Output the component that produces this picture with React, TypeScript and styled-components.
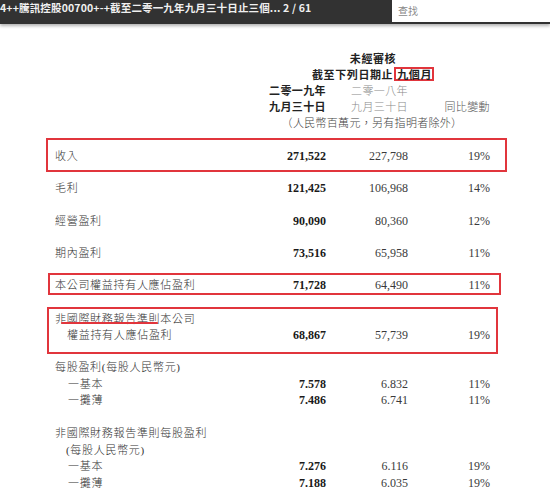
import React from "react";
import styled, { createGlobalStyle, css } from "styled-components";

const GlobalStyle = createGlobalStyle`
  html, body { margin: 0; padding: 0; background: #fff; }
  body {
    width: 550px;
    height: 499px;
    overflow: hidden;
    font-family: "Liberation Serif", "Noto Sans CJK TC", serif;
  }
`;

const RED = "#e1353c";
const COLS = "189px 82px 82px 82px";

const TopBar = styled.div`
  position: relative;
  z-index: 1;
  display: flex;
  align-items: flex-start;
  height: 24px;
  background: #323232;
  box-shadow: 0 2px 3px rgba(0, 0, 0, 0.3);
`;

const Title = styled.div`
  flex: 1;
  height: 22px;
  line-height: 22px;
  overflow: hidden;
  white-space: nowrap;
  color: #f0f0f0;
  font: 700 10.5px "Noto Sans CJK TC", "Liberation Sans", sans-serif;
  letter-spacing: 0.15px;
`;

const Search = styled.div`
  width: 158px;
  height: 22px;
  box-sizing: border-box;
  padding-left: 6px;
  background: #fff;
  color: #8a8a8a;
  font: 400 10px/22px "Noto Sans CJK TC", "Liberation Sans", sans-serif;
`;

const Content = styled.div`
  padding-top: 26px;
`;

const Table = styled.div`
  margin-left: 55px;
  width: 435px;
`;

const HeadGrid = styled.div`
  display: grid;
  grid-template-columns: ${COLS};
  line-height: 16px;
  font-family: "Noto Sans CJK TC", sans-serif;
  font-size: 11px;
  letter-spacing: 0.6px;
`;

const HeadSpan = styled.div`
  grid-column: 2 / 5;
  text-align: center;
  padding-left: 12px;
  font-weight: 700;
  color: #222;
`;

const Mark = styled.span`
  display: inline-block;
  line-height: 10px;
  padding: 0 0 0 1px;
  border: 2px solid ${RED};
  margin-left: 1px;
`;

const HeadCell = styled.div<{ $col: number; $tone: "bold" | "light" | "mid" }>`
  grid-column: ${(p) => p.$col};
  text-align: right;
  letter-spacing: 0.4px;
  ${(p) =>
    p.$tone === "bold"
      ? css`
          font-weight: 700;
          color: #222;
        `
      : p.$tone === "light"
      ? css`
          font-weight: 300;
          color: #8a8a8a;
        `
      : css`
          font-weight: 300;
          color: #555;
        `}
`;

const Unit = styled.div`
  grid-column: 2 / 5;
  text-align: center;
  padding-left: 10px;
  color: #444;
  font-weight: 300;
  letter-spacing: 0.3px;
`;

type Box = { l: number; r: number };

const Row = styled.div<{ $mt?: number; $pt?: number; $pb?: number; $lh?: number; $box?: Box }>`
  display: grid;
  grid-template-columns: ${COLS};
  line-height: ${(p) => p.$lh ?? 16}px;
  margin-top: ${(p) => p.$mt ?? 0}px;
  padding-top: ${(p) => p.$pt ?? 0}px;
  padding-bottom: ${(p) => p.$pb ?? 0}px;
  ${(p) =>
    p.$box &&
    css`
      border: 2px solid ${RED};
      margin-left: -${p.$box.l}px;
      margin-right: -${p.$box.r}px;
      padding-left: ${p.$box.l - 2}px;
      padding-right: ${p.$box.r - 2}px;
    `}
`;

const Label = styled.div<{ $indent?: number; $full?: boolean }>`
  padding-left: ${(p) => p.$indent ?? 0}px;
  ${(p) => p.$full && "grid-column: 1 / -1;"}
  font-size: 11px;
  font-weight: 300;
  letter-spacing: 0.7px;
  color: #333;
  white-space: nowrap;
`;

const Num = styled.div<{ $bold?: boolean }>`
  text-align: right;
  font-family: "Liberation Serif", serif;
  font-size: 12px;
  font-weight: ${(p) => (p.$bold ? 700 : 400)};
  color: ${(p) => (p.$bold ? "#1a1a1a" : "#3a3a3a")};
`;

const Underlined = styled.span`
  position: relative;
  &::after {
    content: "";
    position: absolute;
    left: -6px;
    right: 2px;
    bottom: 1px;
    height: 2px;
    border-radius: 1px;
    background: ${RED};
  }
`;

type Vals = [string, string, string];

const Values = ({ v }: { v: Vals }) => (
  <>
    <Num $bold>{v[0]}</Num>
    <Num>{v[1]}</Num>
    <Num>{v[2]}</Num>
  </>
);

export default function App() {
  return (
    <>
      <GlobalStyle />
      <TopBar>
        <Title>4++騰訊控股00700+-+截至二零一九年九月三十日止三個... 2 / 61</Title>
        <Search>查找</Search>
      </TopBar>
      <Content>
        <Table>
          <HeadGrid>
            <HeadSpan>未經審核</HeadSpan>
            <HeadSpan>
              截至下列日期止<Mark>九個月</Mark>
            </HeadSpan>
            <HeadCell $col={2} $tone="bold">二零一九年</HeadCell>
            <HeadCell $col={3} $tone="light">二零一八年</HeadCell>
            <HeadCell $col={2} $tone="bold">九月三十日</HeadCell>
            <HeadCell $col={3} $tone="light">九月三十日</HeadCell>
            <HeadCell $col={4} $tone="mid">同比變動</HeadCell>
            <Unit>（人民幣百萬元，另有指明者除外）</Unit>
          </HeadGrid>

          <Row $mt={8} $pt={8} $pb={6} $box={{ l: 9, r: 17 }}>
            <Label>收入</Label>
            <Values v={["271,522", "227,798", "19%"]} />
          </Row>
          <Row $pt={8} $pb={8}>
            <Label>毛利</Label>
            <Values v={["121,425", "106,968", "14%"]} />
          </Row>
          <Row $pt={9} $pb={8}>
            <Label>經營盈利</Label>
            <Values v={["90,090", "80,360", "12%"]} />
          </Row>
          <Row $pt={8} $pb={8}>
            <Label>期內盈利</Label>
            <Values v={["73,516", "65,958", "11%"]} />
          </Row>
          <Row $mt={4} $pt={2} $box={{ l: 7, r: 11 }}>
            <Label>本公司權益持有人應佔盈利</Label>
            <Values v={["71,728", "64,490", "11%"]} />
          </Row>
          <Row $mt={12} $pt={2} $pb={9} $box={{ l: 8, r: 8 }}>
            <Label $full>
              非<Underlined>國際財務報告準則</Underlined>本公司
            </Label>
            <Label $indent={12}>權益持有人應佔盈利</Label>
            <Values v={["68,867", "57,739", "19%"]} />
          </Row>

          <Row $mt={5} $lh={16.5}>
            <Label $full>每股盈利(每股人民幣元)</Label>
          </Row>
          <Row $lh={16.5}>
            <Label $indent={13}>一基本</Label>
            <Values v={["7.578", "6.832", "11%"]} />
          </Row>
          <Row $lh={16.5}>
            <Label $indent={13}>一攤薄</Label>
            <Values v={["7.486", "6.741", "11%"]} />
          </Row>

          <Row $mt={16.5} $lh={16.5}>
            <Label $full>非國際財務報告準則每股盈利</Label>
          </Row>
          <Row $lh={16.5}>
            <Label $full $indent={11}>(每股人民幣元)</Label>
          </Row>
          <Row $lh={16.5}>
            <Label $indent={13}>一基本</Label>
            <Values v={["7.276", "6.116", "19%"]} />
          </Row>
          <Row $lh={16.5}>
            <Label $indent={13}>一攤薄</Label>
            <Values v={["7.188", "6.035", "19%"]} />
          </Row>
        </Table>
      </Content>
    </>
  );
}
